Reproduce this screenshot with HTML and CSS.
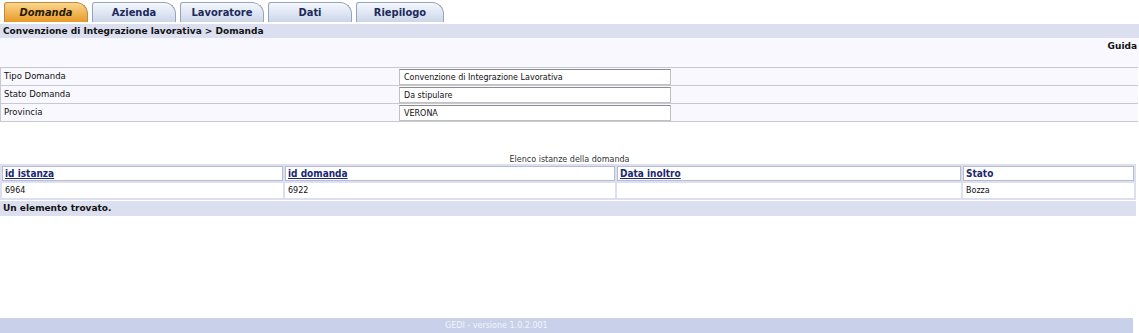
FILE: index.html
```html
<!DOCTYPE html>
<html lang="it">

<head>
    <meta charset="UTF-8">
    <title>GEDI - Domanda</title>
    <link rel="stylesheet" href="styles.css">
</head>

<body>
    <div class="tabs">
        <div class="tab active">Domanda</div>
        <div class="tab">Azienda</div>
        <div class="tab">Lavoratore</div>
        <div class="tab">Dati</div>
        <div class="tab">Riepilogo</div>
    </div>

    <div class="crumb">Convenzione di Integrazione lavorativa &gt; Domanda</div>

    <div class="help">Guida</div>

    <table class="form">
        <tr>
            <td class="label">Tipo Domanda</td>
            <td class="field"><div class="input">Convenzione di Integrazione Lavorativa</div></td>
            <td></td>
        </tr>
        <tr>
            <td class="label">Stato Domanda</td>
            <td class="field"><div class="input">Da stipulare</div></td>
            <td></td>
        </tr>
        <tr>
            <td class="label">Provincia</td>
            <td class="field"><div class="input">VERONA</div></td>
            <td></td>
        </tr>
    </table>

    <div class="caption">Elenco istanze della domanda</div>
    <table class="list">
        <tr>
            <th class="c1"><a href="#">id istanza</a></th>
            <th class="c2"><a href="#">id domanda</a></th>
            <th class="c3"><a href="#">Data inoltro</a></th>
            <th>Stato</th>
        </tr>
        <tr>
            <td>6964</td>
            <td>6922</td>
            <td></td>
            <td>Bozza</td>
        </tr>
    </table>
    <div class="found">Un elemento trovato.</div>

    <div class="footer">GEDI - versione 1.0.2.001</div>
</body>
</html>
```

FILE: styles.css
```css
body {
    margin: 0;
    height: 333px;
    display: flex;
    flex-direction: column;
    font-family: "DejaVu Sans", Verdana, sans-serif;
    font-size: 9px;
    color: #111;
    background: #fff;
}

.tabs {
    display: flex;
    gap: 4px;
    padding: 2px 0 0 4px;
    height: 20px;
}

.tab {
    width: 82px;
    height: 19px;
    line-height: 19px;
    text-align: center;
    font-family: "DejaVu Sans Condensed", "DejaVu Sans", sans-serif;
    font-size: 11px;
    font-weight: bold;
    color: #1c2a5c;
    border: 1px solid #98a4bc;
    border-bottom: none;
    border-radius: 3px 12px 0 0;
    background: linear-gradient(#f4f7fd, #ccd6ea);
}

.tab:last-child {
    width: 86px;
}

.tab.active {
    font-style: italic;
    color: #2a1a00;
    border-color: #c08a3a;
    background: linear-gradient(#f9d68e, #e89a28);
}

.crumb {
    margin-top: 2px;
    height: 14px;
    line-height: 14px;
    padding-left: 3px;
    font-weight: bold;
    background: #dcdff0;
}

.help {
    height: 29px;
    padding: 3px 2px 0 0;
    box-sizing: border-box;
    text-align: right;
    font-weight: bold;
    background: #f8f8fe;
}

.form {
    width: 1138px;
    border-collapse: collapse;
    background: #f8f8fe;
}

.form td {
    height: 16px;
    padding: 0;
    border-top: 1px solid #c8c8d0;
    border-bottom: 1px solid #c8c8d0;
    vertical-align: top;
}

.form .label {
    width: 395px;
    height: 13px;
    padding: 3px 0 0 3px;
    font-size: 8.5px;
    line-height: 11px;
    border-left: 1px solid #c8c8d0;
}

.form .field {
    width: 272px;
}

.input {
    height: 14px;
    line-height: 15px;
    margin-top: 1px;
    padding-left: 4px;
    font-size: 8px;
    border: 1px solid #c0c0c0;
    border-top-color: #8c8c8c;
    background: #fff;
}

.caption {
    margin-top: 33px;
    text-align: center;
    font-size: 8px;
    color: #333;
    height: 9px;
    line-height: 9px;
}

.list {
    width: 1136px;
    border-collapse: separate;
    border-spacing: 2px;
    background: #dcdff0;
}

.list th {
    height: 13px;
    padding: 0 0 0 2px;
    text-align: left;
    font-family: "DejaVu Sans Condensed", "DejaVu Sans", sans-serif;
    font-size: 10px;
    color: #1c2870;
    background: #fff;
    border: 1px solid #b8bccc;
}

.list th a {
    color: #1c2870;
}

.list .c1 {
    width: 277px;
}

.list .c2 {
    width: 326px;
}

.list .c3 {
    width: 340px;
}

.list td {
    height: 15px;
    padding: 0 0 0 3px;
    font-size: 8px;
    background: #fff;
}

.found {
    margin-top: 1px;
    height: 15px;
    line-height: 14px;
    padding-left: 3px;
    font-weight: bold;
    background: #dcdff0;
    width: 1133px;
}

.footer {
    margin-top: auto;
    width: 1133px;
    height: 15px;
    line-height: 15px;
    padding-left: 445px;
    box-sizing: border-box;
    font-size: 8px;
    color: #f2f4fb;
    background: #c9d1ea;
}
```
